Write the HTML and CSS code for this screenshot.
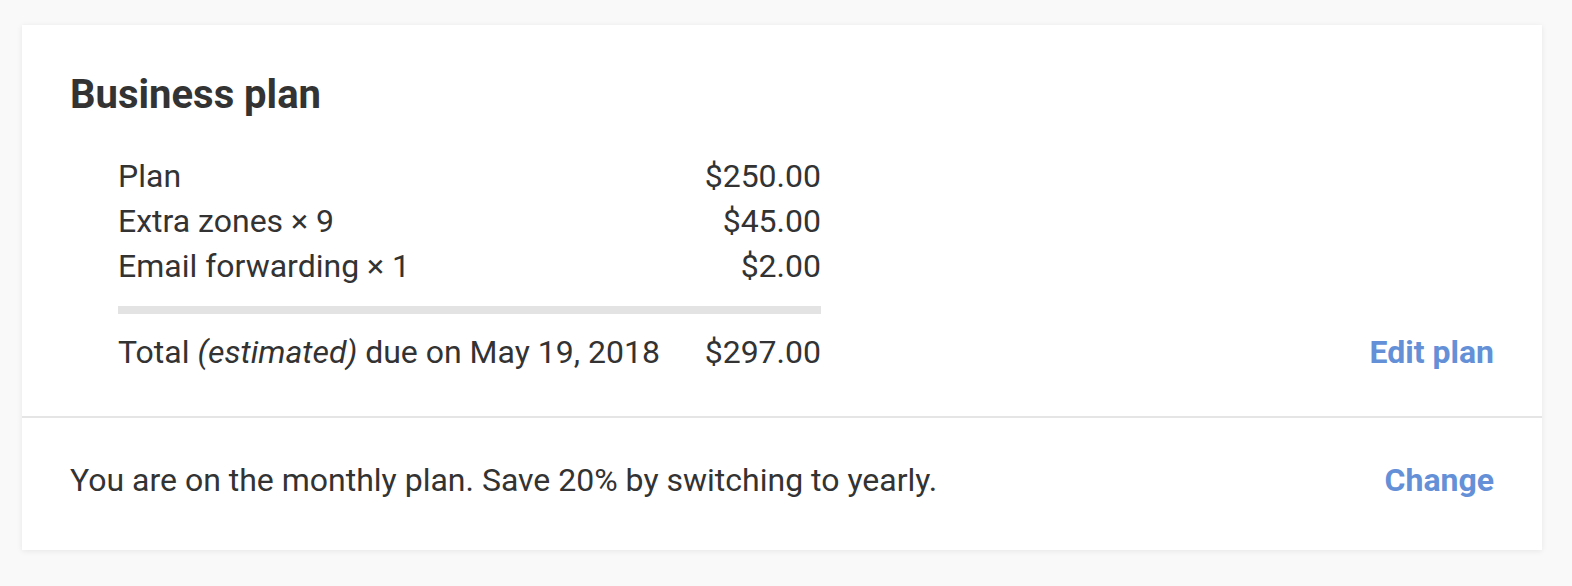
FILE: index.html
```html
<!DOCTYPE html>
<html>
<head>
<meta charset="utf-8">
<link rel="stylesheet" href="styles.css">
</head>
<body>
<div class="page">
  <section class="card">
    <div class="card-main">
      <h2 class="title">Business plan</h2>
      <div class="plan-row">
        <div class="summary">
          <div class="line"><span>Plan</span><span>$250.00</span></div>
          <div class="line"><span>Extra zones × 9</span><span>$45.00</span></div>
          <div class="line"><span>Email forwarding × 1</span><span>$2.00</span></div>
          <div class="rule"></div>
          <div class="line total"><span>Total <em>(estimated)</em> due on May 19, 2018</span><span>$297.00</span></div>
        </div>
        <a class="action" href="#">Edit plan</a>
      </div>
    </div>
    <div class="card-foot">
      <span>You are on the monthly plan. Save 20% by switching to yearly.</span>
      <a class="action" href="#">Change</a>
    </div>
  </section>
</div>
</body>
</html>
```
FILE: styles.css
```css
html, body {
  margin: 0;
  padding: 0;
  background: #f9f9f9;
}
body {
  font-family: Roboto, "Liberation Sans", sans-serif;
  color: #333333;
}
.page {
  padding: 25px 30px 36px 22px;
}
.card {
  background: #ffffff;
  box-shadow: 0 1px 6px rgba(0, 0, 0, 0.08);
}
.card-main {
  padding: 46px 48px 41px 48px;
  border-bottom: 2px solid #e5e5e5;
}
.title {
  margin: 0 0 35px 0;
  font-size: 40px;
  font-weight: 700;
  line-height: 48px;
}
.plan-row {
  display: flex;
  justify-content: space-between;
  align-items: flex-end;
}
.summary {
  margin-left: 48px;
  width: 703px;
  font-size: 32px;
}
.line {
  display: flex;
  justify-content: space-between;
  line-height: 45px;
}
.rule {
  height: 8px;
  background: #e3e3e3;
  margin: 17px 0 16px 0;
}
.action {
  color: #6490d8;
  font-weight: 700;
  font-size: 32px;
  text-decoration: none;
  line-height: 45px;
}
.card-foot {
  display: flex;
  justify-content: space-between;
  align-items: center;
  padding: 40px 48px 47px 48px;
  font-size: 32px;
  line-height: 45px;
}
```
